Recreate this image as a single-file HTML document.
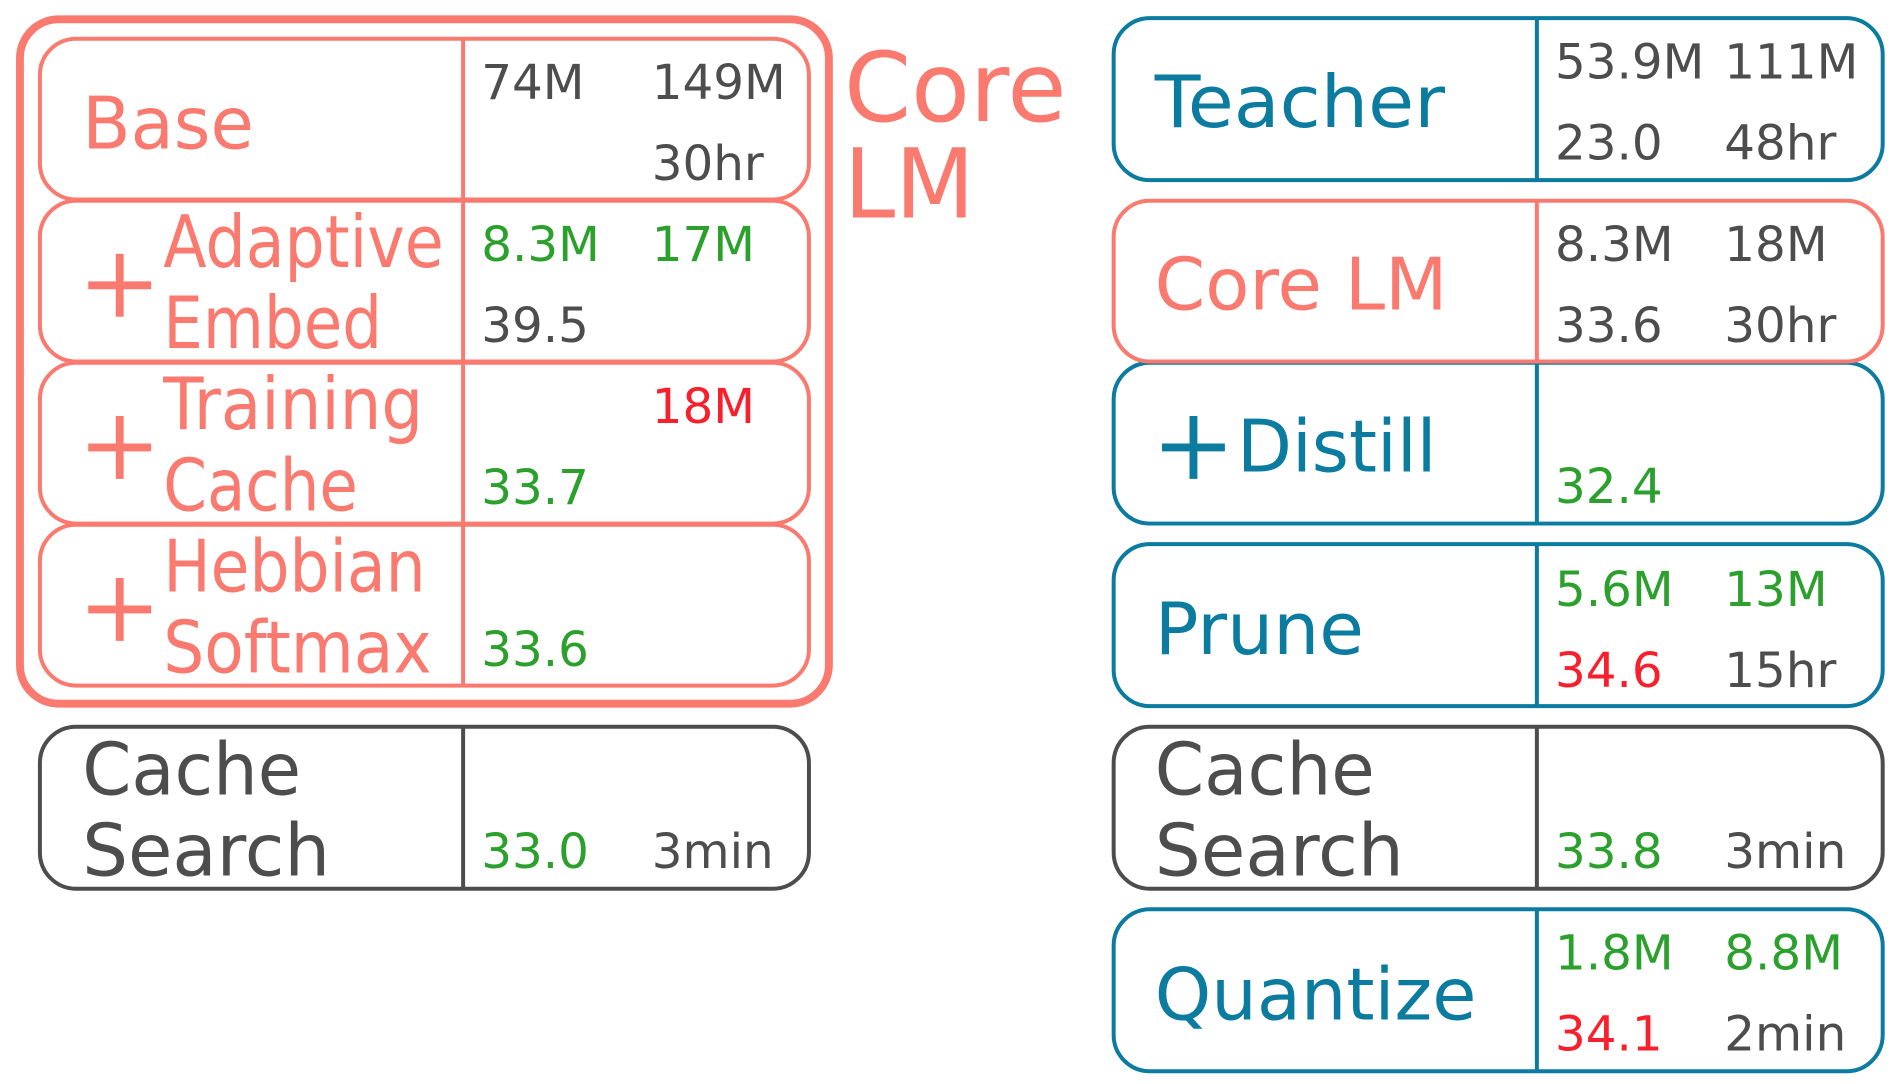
<!DOCTYPE html>
<html><head><meta charset="utf-8"><style>
html,body{margin:0;padding:0;background:#fff;width:1896px;height:1084px;overflow:hidden}
svg{display:block}
text{font-family:"DejaVu Sans","Liberation Sans",sans-serif}
.L{font-size:60px}
.N{font-size:40px}
.s{fill:#fa7a70}.b{fill:#0b7ba0}.g{fill:#4d4d4d}.gr{fill:#2ca02c}.r{fill:#f8202c}
</style></head><body>
<svg width="1896" height="1084" viewBox="0 0 1568 896.5" preserveAspectRatio="none" xmlns="http://www.w3.org/2000/svg">
<g fill="none" stroke-width="3.3">
<rect x="16.5" y="16" width="669" height="566" rx="32" stroke="#fa7a70" stroke-width="6.5"/>
<g stroke="#fa7a70">
<rect x="33" y="32" width="636" height="133" rx="30"/>
<rect x="33" y="166" width="636" height="133" rx="30"/>
<rect x="33" y="300" width="636" height="133" rx="30"/>
<rect x="33" y="434" width="636" height="133" rx="30"/>
<line x1="383" y1="32" x2="383" y2="567"/>
<path d="M73 236h52M99 210v52M73 370h52M99 344v52M73 504h52M99 478v52" stroke-width="6.5"/>
</g>
<g stroke="#4d4d4d">
<rect x="33" y="601" width="636" height="134" rx="30"/>
<line x1="383" y1="601" x2="383" y2="735"/>
<rect x="921" y="601" width="636" height="134" rx="30"/>
<line x1="1271" y1="601" x2="1271" y2="735"/>
</g>
<g stroke="#0b7ba0">
<rect x="921" y="15" width="636" height="134" rx="30"/>
<line x1="1271" y1="15" x2="1271" y2="149"/>
<rect x="921" y="300" width="636" height="133" rx="30"/>
<line x1="1271" y1="300" x2="1271" y2="433"/>
<path d="M961 370h52M987 344v52" stroke-width="6.5"/>
<rect x="921" y="450" width="636" height="134" rx="30"/>
<line x1="1271" y1="450" x2="1271" y2="584"/>
<rect x="921" y="752" width="636" height="134" rx="30"/>
<line x1="1271" y1="752" x2="1271" y2="886"/>
</g>
<g stroke="#fa7a70">
<rect x="921" y="166" width="636" height="133" rx="30"/>
<line x1="1271" y1="166" x2="1271" y2="299"/>
</g>
</g>

<text class="L s" x="68" y="123" textLength="142" lengthAdjust="spacingAndGlyphs">Base</text>
<text class="L s" x="135" y="221" textLength="232" lengthAdjust="spacingAndGlyphs">Adaptive</text>
<text class="L s" x="135" y="288" textLength="181" lengthAdjust="spacingAndGlyphs">Embed</text>
<text class="L s" x="135" y="355" textLength="215" lengthAdjust="spacingAndGlyphs">Training</text>
<text class="L s" x="135" y="422" textLength="161" lengthAdjust="spacingAndGlyphs">Cache</text>
<text class="L s" x="135" y="489" textLength="217" lengthAdjust="spacingAndGlyphs">Hebbian</text>
<text class="L s" x="135" y="556" textLength="222" lengthAdjust="spacingAndGlyphs">Softmax</text>
<text class="L g" x="68" y="657" textLength="181" lengthAdjust="spacingAndGlyphs">Cache</text>
<text class="L g" x="68" y="724" textLength="205" lengthAdjust="spacingAndGlyphs">Search</text>
<text class="s" style="font-size:80px" x="698" y="100" textLength="184" lengthAdjust="spacingAndGlyphs">Core</text>
<text class="s" style="font-size:80px" x="698" y="180" textLength="108" lengthAdjust="spacingAndGlyphs">LM</text>

<text class="N g" x="398" y="82">74M</text>
<text class="N g" x="539" y="82">149M</text>
<text class="N g" x="539" y="149">30hr</text>
<text class="N gr" x="398" y="216">8.3M</text>
<text class="N gr" x="539" y="216">17M</text>
<text class="N g" x="398" y="283">39.5</text>
<text class="N r" x="539" y="350">18M</text>
<text class="N gr" x="398" y="417">33.7</text>
<text class="N gr" x="398" y="551">33.6</text>
<text class="N gr" x="398" y="718">33.0</text>
<text class="N g" x="539" y="718">3min</text>

<text class="L b" x="955" y="105" textLength="240" lengthAdjust="spacingAndGlyphs">Teacher</text>
<text class="L s" x="955" y="256" textLength="242" lengthAdjust="spacingAndGlyphs">Core LM</text>
<text class="L b" x="1023" y="390" textLength="165" lengthAdjust="spacingAndGlyphs">Distill</text>
<text class="L b" x="955" y="541" textLength="173" lengthAdjust="spacingAndGlyphs">Prune</text>
<text class="L g" x="955" y="657" textLength="182" lengthAdjust="spacingAndGlyphs">Cache</text>
<text class="L g" x="955" y="724" textLength="206" lengthAdjust="spacingAndGlyphs">Search</text>
<text class="L b" x="955" y="843" textLength="266" lengthAdjust="spacingAndGlyphs">Quantize</text>

<text class="N g" x="1286" y="65">53.9M</text>
<text class="N g" x="1426" y="65">111M</text>
<text class="N g" x="1286" y="132">23.0</text>
<text class="N g" x="1426" y="132">48hr</text>
<text class="N g" x="1286" y="216">8.3M</text>
<text class="N g" x="1426" y="216">18M</text>
<text class="N g" x="1286" y="283">33.6</text>
<text class="N g" x="1426" y="283">30hr</text>
<text class="N gr" x="1286" y="416">32.4</text>
<text class="N gr" x="1286" y="501">5.6M</text>
<text class="N gr" x="1426" y="501">13M</text>
<text class="N r" x="1286" y="568">34.6</text>
<text class="N g" x="1426" y="568">15hr</text>
<text class="N gr" x="1286" y="718">33.8</text>
<text class="N g" x="1426" y="718">3min</text>
<text class="N gr" x="1286" y="802">1.8M</text>
<text class="N gr" x="1426" y="802">8.8M</text>
<text class="N r" x="1286" y="869">34.1</text>
<text class="N g" x="1426" y="869">2min</text>
</svg>
</body></html>
